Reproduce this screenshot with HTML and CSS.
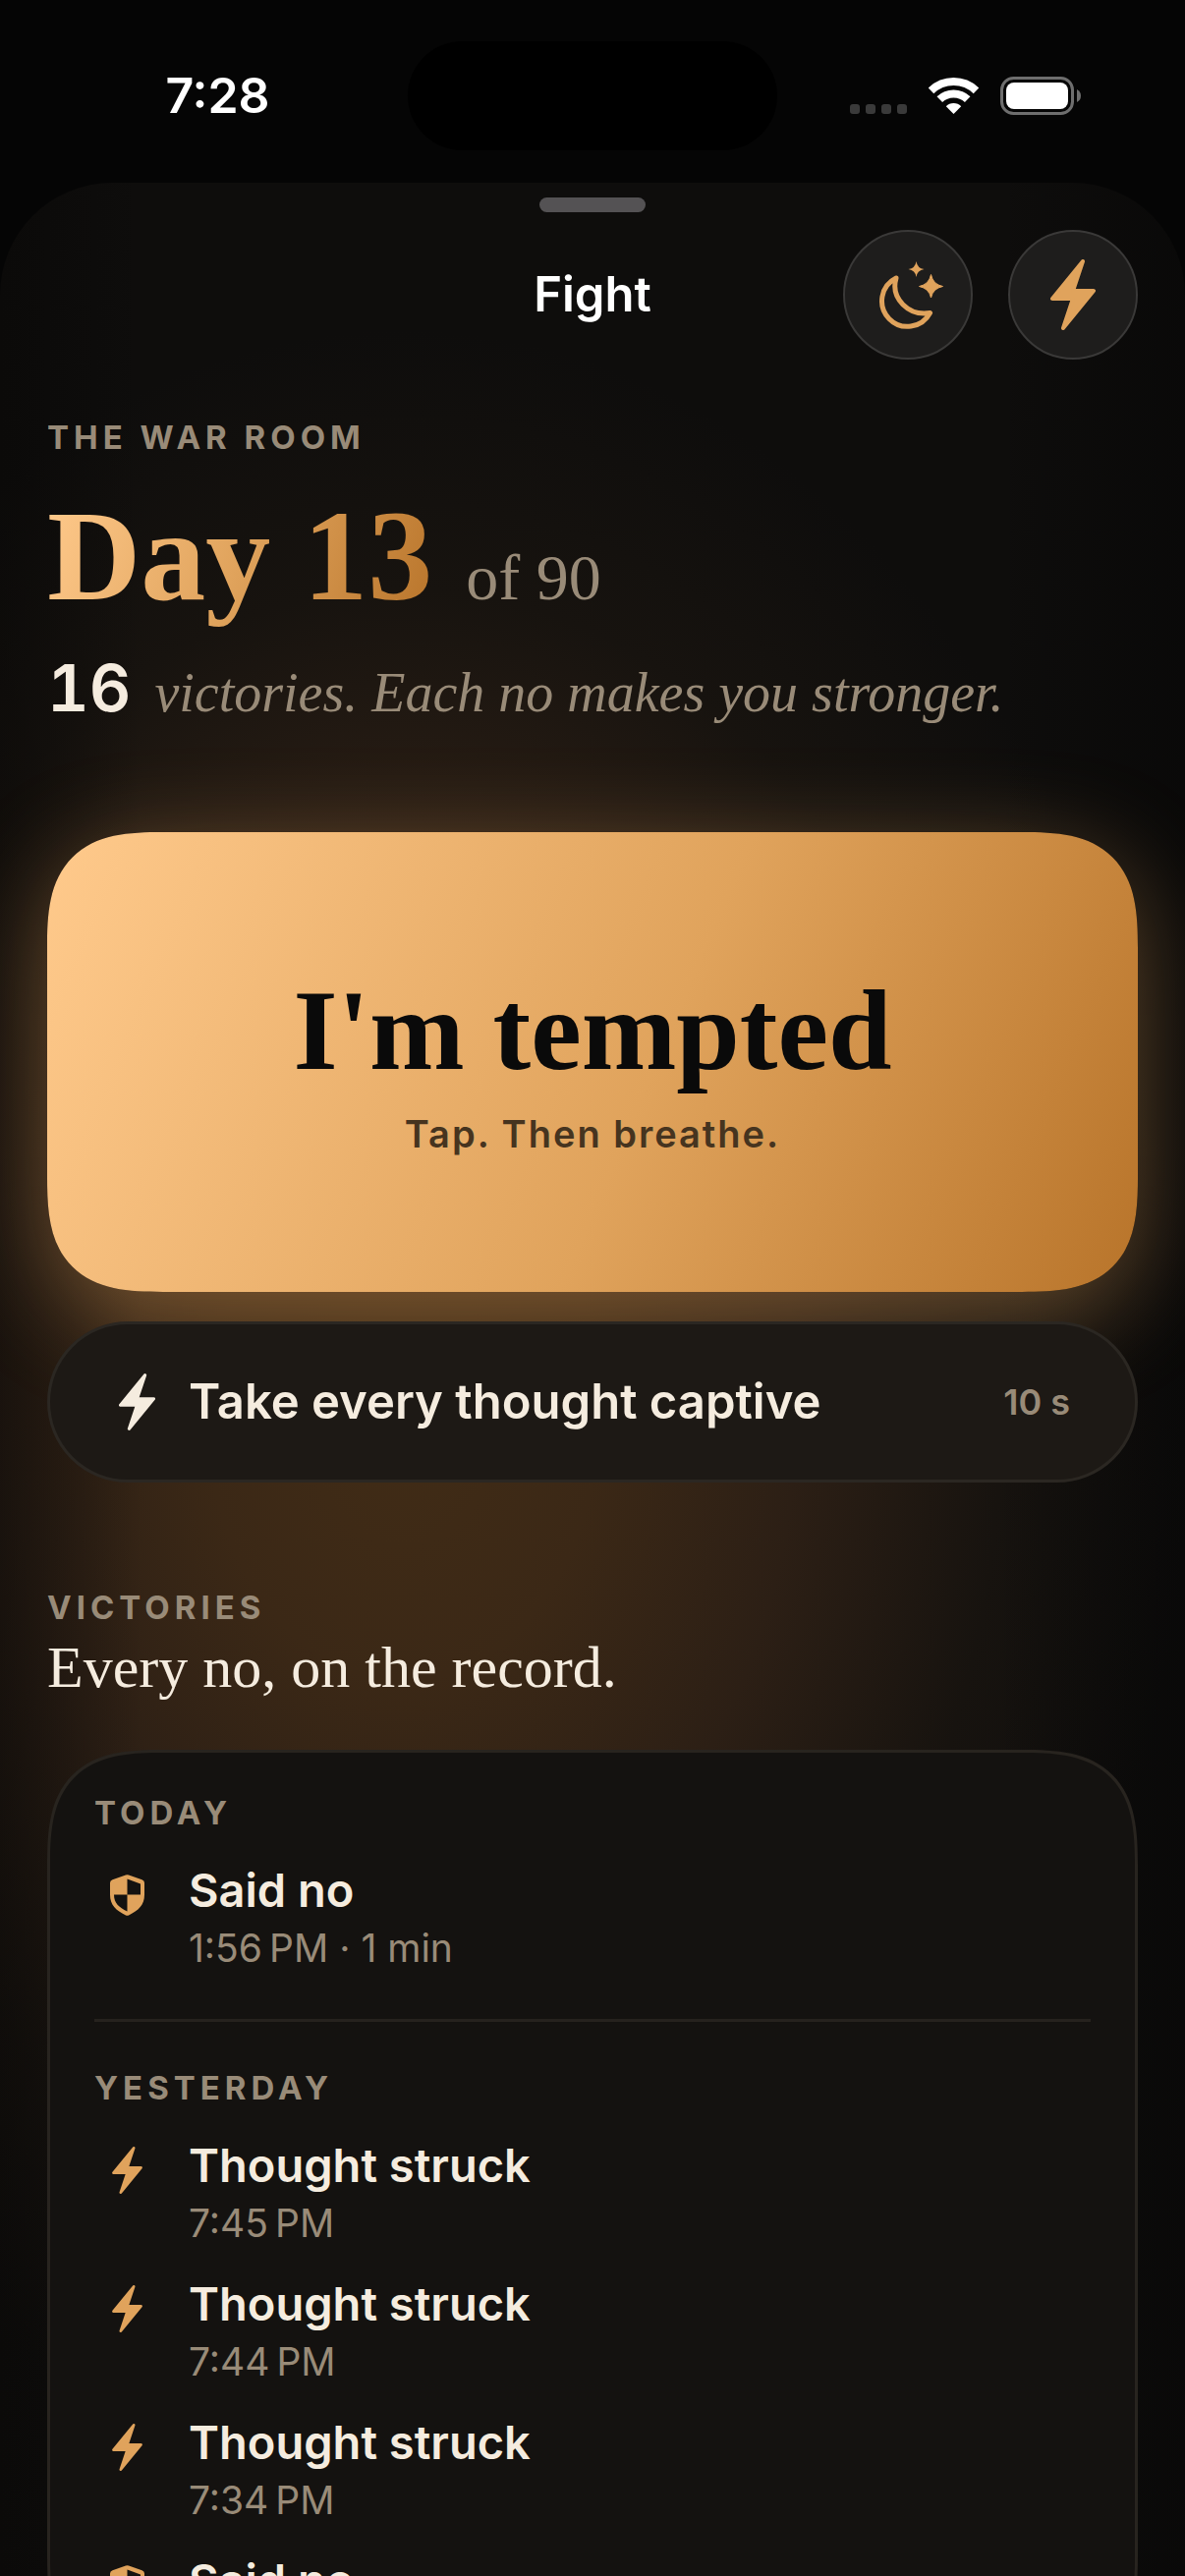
FILE: index.html
```html
<!DOCTYPE html>
<html lang="en">
  <head>
    <meta charset="utf-8"/>
    <meta name="viewport" content="width=device-width, initial-scale=1"/>
    <title>Fight</title>
    <link rel="stylesheet" href="styles.css">
  </head>
  <body>
    <!-- shared icons -->
    <svg class="sprite" aria-hidden="true">
      <symbol id="bolt" viewBox="0 0 46 72">
        <path d="M33 2 2 40H23L13 70 44 32H23Z" fill="currentColor" stroke="currentColor" stroke-width="4" stroke-linejoin="round"/>
      </symbol>
      <symbol id="shield" viewBox="0 0 35 42">
        <path fill="currentColor" fill-rule="evenodd" d="M16 .5Q17.500 -.2 19 .5L32.500 5.200Q35 6.200 35 8.500V20.500C35 31 29 36.500 19 41.500Q17.500 42.200 16 41.500C6 36.500 0 31 0 20.500V8.500Q0 6.200 2.500 5.200ZM17.500 4.500V20.500H31V9.500ZM17.500 20.500H4C4 29 9 33.500 17.500 37.500Z"/>
      </symbol>
      <symbol id="moon" viewBox="-8 0 74 69">
        <path d="M17 17A26 26 0 1 0 51.500 52.500C30 56 11 38 17 17Z" fill="none" stroke="currentColor" stroke-width="5" stroke-linejoin="round"/>
        <path fill="currentColor" d="M37.500 0Q38.500 7 45.500 8Q38.500 9 37.500 16Q36.500 9 29.500 8Q36.500 7 37.500 0Z"/>
        <path fill="currentColor" stroke="currentColor" stroke-linejoin="round" d="M52.500 13.500Q54.500 23.500 64.500 25.500Q54.500 27.500 52.500 37Q50.500 27.500 40.500 25.500Q50.500 23.500 52.500 13.500Z"/>
      </symbol>
    </svg>

    <div class="statusbar">
      <span class="time">7:28</span>
      <span class="island"></span>
      <div class="indicators">
        <svg width="58" height="39" viewBox="0 0 58 39" fill="#3a3a3a">
          <rect x="0" y="28" width="10" height="10" rx="3"/>
          <rect x="16" y="28" width="10" height="10" rx="3"/>
          <rect x="32" y="28" width="10" height="10" rx="3"/>
          <rect x="48" y="28" width="10" height="10" rx="3"/>
        </svg>
        <svg width="51" height="39" viewBox="0 -1 51 39" fill="none" stroke="#fff" stroke-width="8">
          <path d="M2.500 13.300A33 33 0 0 1 48.500 13.300"/>
          <path d="M11.300 22.200A20.500 20.500 0 0 1 39.700 22.200"/>
          <path d="M25.500 37 17.800 29.200A11 11 0 0 1 33.200 29.200Z" fill="#fff" stroke="none"/>
        </svg>
        <svg width="82" height="39" viewBox="0 0 82 39">
          <rect x="1.500" y="1.500" width="72" height="36" rx="12" fill="none" stroke="#6e6e6e" stroke-width="3"/>
          <rect x="6" y="6" width="63" height="27" rx="8" fill="#fff"/>
          <path d="M78 13Q82 15 82 19.500T78 26Z" fill="#6e6e6e"/>
        </svg>
      </div>
    </div>

    <main class="sheet">
      <div class="grabber"></div>
      <header class="header">
        <h2 class="header-title">Fight</h2>
        <div class="header-actions">
          <button class="round-btn" aria-label="Night"><svg width="74" height="69"><use href="#moon"/></svg></button>
          <button class="round-btn" aria-label="Strike"><svg width="46" height="72"><use href="#bolt"/></svg></button>
        </div>
      </header>

      <div class="content">
        <section class="intro">
          <p class="eyebrow">The war room</p>
          <h1 class="day"><span class="day-count">Day 13</span><span class="day-total">of 90</span></h1>
          <p class="tally"><strong>16</strong><em>victories. Each no makes you stronger.</em></p>
        </section>

        <button class="tempted">
          <span class="tempted-title">I'm tempted</span>
          <span class="tempted-hint">Tap. Then breathe.</span>
        </button>

        <button class="captive">
          <svg width="37" height="58"><use href="#bolt"/></svg>
          <span>Take every thought captive</span>
          <small>10 s</small>
        </button>

        <section class="victories">
          <p class="eyebrow">Victories</p>
          <h2 class="victories-title">Every no, on the record.</h2>

          <div class="log">
            <div class="log-day">
              <h3 class="eyebrow">Today</h3>
              <ul>
                <li>
                  <span class="log-icon"><svg width="35" height="42"><use href="#shield"/></svg></span>
                  <div><p class="log-name">Said no</p><p class="log-time">1:56&#8239;PM · 1 min</p></div>
                </li>
              </ul>
            </div>
            <div class="log-day">
              <h3 class="eyebrow">Yesterday</h3>
              <ul>
                <li>
                  <span class="log-icon"><svg width="31" height="48"><use href="#bolt"/></svg></span>
                  <div><p class="log-name">Thought struck</p><p class="log-time">7:45&#8239;PM</p></div>
                </li>
                <li>
                  <span class="log-icon"><svg width="31" height="48"><use href="#bolt"/></svg></span>
                  <div><p class="log-name">Thought struck</p><p class="log-time">7:44&#8239;PM</p></div>
                </li>
                <li>
                  <span class="log-icon"><svg width="31" height="48"><use href="#bolt"/></svg></span>
                  <div><p class="log-name">Thought struck</p><p class="log-time">7:34&#8239;PM</p></div>
                </li>
                <li>
                  <span class="log-icon"><svg width="35" height="42"><use href="#shield"/></svg></span>
                  <div><p class="log-name">Said no</p></div>
                </li>
              </ul>
            </div>
          </div>
        </section>
      </div>
    </main>
  </body>
</html>
```
FILE: styles.css
```css
* {
  box-sizing: border-box;
  margin: 0;
  padding: 0;
}

body {
  display: flex;
  flex-direction: column;
  height: 100vh;
  overflow: hidden;
  background-color: #050505;
  color: #f5ecdf;
  font-family: Inter, "Liberation Sans", sans-serif;
}

button {
  border: none;
  background: none;
  color: inherit;
  font: inherit;
  cursor: pointer;
}

svg {
  display: block;
  flex: none;
}

ul {
  list-style: none;
}

.sprite {
  position: absolute;
  width: 0;
  height: 0;
}

/* status bar */
.statusbar {
  display: grid;
  grid-template-columns: 1fr 376px 1fr;
  align-items: center;
  flex: none;
  height: 186px;
  padding-bottom: 8px;
}

.time {
  padding-left: 28px;
  text-align: center;
  color: white;
  font-size: 50px;
  font-weight: 600;
  line-height: 60px;
}

.island {
  height: 111px;
  margin-top: 16px;
  border-radius: 56px;
  background-color: black;
}

.time,
.indicators {
  margin-top: 16px;
}

.indicators {
  display: flex;
  justify-content: center;
  gap: 22px;
  padding-right: 32px;
}

/* sheet */
.sheet {
  flex: 1;
  min-height: 0;
  overflow: hidden;
  padding-top: 15px;
  border-radius: 114px 114px 0 0;
  background:
    linear-gradient(to right, rgba(8, 7, 6, 0.5), transparent 12%, transparent 84%, rgba(5, 5, 5, 0.5)),
    radial-gradient(ellipse 800px 1100px at 34% 1250px, #412c16 0%, #3b2816 25%, #2c1f15 50%, #17130f 76%, transparent 100%),
    #0e0d0c;
}

.grabber {
  width: 108px;
  height: 15px;
  margin: 0 auto 18px;
  border-radius: 8px;
  background-color: #545254;
}

.header {
  display: grid;
  grid-template-columns: 1fr auto 1fr;
  align-items: center;
  padding: 0 48px;
}

.header-title {
  grid-column: 2;
  color: white;
  font-size: 49px;
  font-weight: 600;
  line-height: 60px;
}

.header-actions {
  display: flex;
  justify-content: flex-end;
  gap: 36px;
}

.round-btn {
  display: flex;
  align-items: center;
  justify-content: center;
  width: 132px;
  height: 132px;
  border: 2px solid #3a3938;
  border-radius: 50%;
  background-color: #1e1d1c;
  color: #e0a35c;
}

.content {
  padding: 60px 48px 0;
}

.eyebrow {
  color: #998b78;
  font-size: 33px;
  font-weight: 700;
  line-height: 38px;
  letter-spacing: 5px;
  text-transform: uppercase;
}

.day {
  margin-top: 36px;
  font-family: "Liberation Serif", serif;
  font-size: 132px;
  line-height: 132px;
}

.day-count {
  background: linear-gradient(110deg, #ffca8c, #e0a35c 50%, #b8742a);
  -webkit-background-clip: text;
  background-clip: text;
  color: transparent;
}

.day-total {
  margin-left: 34px;
  color: #998b78;
  font-size: 66px;
  font-weight: 400;
  line-height: 66px;
}

.tally {
  display: flex;
  align-items: baseline;
  gap: 24px;
  margin-top: 32px;
  line-height: 72px;
}

.tally strong {
  font-size: 66px;
  font-weight: 600;
  font-variant-numeric: tabular-nums;
}

.tally em {
  color: #998b78;
  font-family: "Liberation Serif", serif;
  font-size: 56px;
}

.tempted {
  display: flex;
  flex-direction: column;
  align-items: center;
  gap: 23px;
  width: 100%;
  margin-top: 106px;
  padding: 144px 48px 137px;
  border-radius: 84px;
  background: linear-gradient(113deg, #ffca8c, #e0a35c 55%, #b8742a);
  box-shadow: 0 24px 100px rgba(224, 163, 92, 0.4);
  color: #0a0a0a;
}

.tempted-title {
  font-family: "Liberation Serif", serif;
  font-size: 116px;
  font-weight: 700;
  line-height: 116px;
}

.tempted-hint {
  color: #46341f;
  font-size: 38px;
  font-weight: 600;
  line-height: 48px;
  letter-spacing: 2px;
}

.captive {
  display: flex;
  align-items: center;
  gap: 34px;
  width: 100%;
  margin-top: 30px;
  padding: 49px 66px 49px 70px;
  border: 3px solid #2b2722;
  border-radius: 84px;
  background-color: #1d1915;
  font-size: 49px;
  font-weight: 600;
  line-height: 60px;
}

.captive small {
  margin-left: auto;
  color: #998b78;
  font-size: 36px;
  font-weight: 600;
}

.victories {
  padding-top: 108px;
}

.victories-title {
  margin: 10px 0 52px;
  font-family: "Liberation Serif", serif;
  font-size: 60px;
  font-weight: 400;
  line-height: 64px;
}

/* log card */
.log {
  padding: 42px 45px 0;
  border: 3px solid #28241f;
  border-radius: 96px;
  background-color: #141210;
}

/* continuous corners where the browser has them */
@supports (corner-shape: superellipse(1.5)) {
  .tempted,
  .log {
    border-radius: 118px;
    corner-shape: superellipse(1.5);
  }
}

.log-day {
  padding-bottom: 48px;
}

.log-day + .log-day {
  padding-top: 48px;
  border-top: 3px solid #26221e;
}

.log-day ul {
  display: flex;
  flex-direction: column;
  gap: 28px;
  margin-top: 30px;
}

.log-day li {
  display: flex;
  gap: 30px;
}

.log-icon {
  display: flex;
  align-items: center;
  justify-content: center;
  width: 66px;
  height: 70px;
  color: #e0a35c;
}

.log-name {
  margin-bottom: 5px;
  font-size: 47px;
  font-weight: 600;
  line-height: 60px;
}

.log-time {
  color: #998b78;
  font-size: 39px;
  line-height: 48px;
}
```
